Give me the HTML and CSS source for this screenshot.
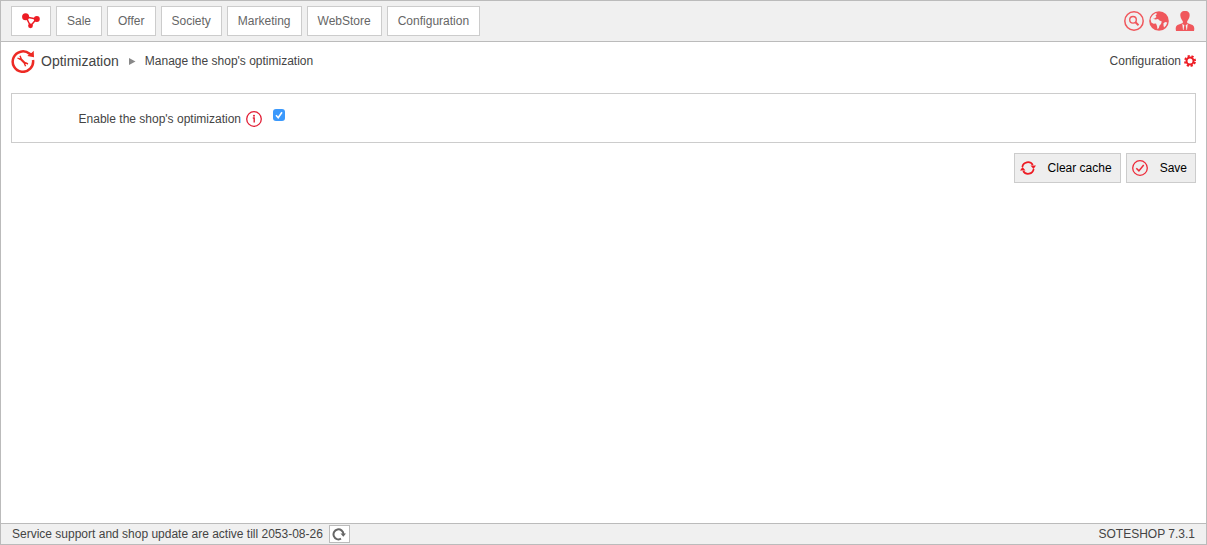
FILE: index.html
```html
<!DOCTYPE html>
<html lang="en">
<head>
  <meta charset="UTF-8">
  <meta name="viewport" content="width=device-width, initial-scale=1.0">
  <title>Optimization</title>
  <link rel="stylesheet" href="styles.css">
</head>
<body>
  <header class="topbar">
    <nav class="menu">
      <a href="#" class="menu-item menu-home" aria-label="Desktop">
        <svg width="18" height="16" viewBox="0 0 18 16">
          <path d="M4 4 L14.500 6 L8.500 13 Z" fill="none" stroke="#ed1c24" stroke-width="1.500"/>
          <circle cx="3.600" cy="3.800" r="3.500" fill="#ed1c24"/>
          <circle cx="14.800" cy="6" r="3" fill="#ed1c24"/>
          <circle cx="8.500" cy="12.800" r="2.400" fill="#ed1c24"/>
        </svg>
      </a>
      <a href="#" class="menu-item">Sale</a>
      <a href="#" class="menu-item">Offer</a>
      <a href="#" class="menu-item">Society</a>
      <a href="#" class="menu-item">Marketing</a>
      <a href="#" class="menu-item">WebStore</a>
      <a href="#" class="menu-item">Configuration</a>
    </nav>
    <div class="tools">
      <a href="#" aria-label="Search">
        <svg width="20" height="20" viewBox="0 0 20 20" fill="none" stroke="#f0575c">
          <circle cx="10" cy="10" r="9.200" stroke-width="1.500"/>
          <circle cx="9" cy="8.800" r="3.300" stroke-width="1.400"/>
          <path d="M11.500 11.300 L14.500 14.300" stroke-width="2"/>
        </svg>
      </a>
      <a href="#" aria-label="Language">
        <svg width="20" height="20" viewBox="0 0 20 20">
          <circle cx="10" cy="10" r="9.800" fill="#f0575c"/>
          <path d="M1.500 8 C2.500 5 4.500 3 7 2 L8 3 L6.500 4.500 L7.500 6 L5.500 7.500 L4 7.800 L6.500 8.500 L9 8 L10.500 9.500 L12.800 10.500 L12 13 L10.500 14.500 L9.800 17 L8.500 18.200 L8 15 L7 12.500 L4.500 12.800 L2.300 11.500 Z" fill="#f0f0f0"/>
          <path d="M14.500 12.500 L16 11 L18.200 11.500 C17.700 13.500 16.500 15.500 15 16.500 L14.500 14.500 Z" fill="#f0f0f0"/>
        </svg>
      </a>
      <a href="#" aria-label="User">
        <svg width="22" height="20" viewBox="-1 0 22 20" fill="#f0575c">
          <path d="M10 0 C13.500 0 15 2 14.600 5 C14.300 7.500 13 9 12.200 10.200 L12.200 12 L17.500 14 C18.800 14.700 19.300 16 19.300 18 L19 20 L1 20 L.7 18 C.7 16 1.200 14.700 2.500 14 L7.800 12 L7.800 10.200 C7 9 5.700 7.500 5.400 5 C5 2 6.500 0 10 0 Z"/>
          <path d="M7.300 12.800 L9.300 14.200 L8.500 19 L8 19 Z M12.700 12.800 L10.700 14.200 L11.500 19 L12 19 Z" fill="#f0f0f0"/>
        </svg>
      </a>
    </div>
  </header>

  <main class="content">
    <div class="title-row">
      <div class="breadcrumb">
        <svg class="title-icon" width="24" height="24" viewBox="0 0 24 24">
          <path d="M22 11 A10.200 10.200 0 1 1 18.500 4.800" fill="none" stroke="#ed2a24" stroke-width="2.500"/>
          <path d="M22.700 1.800 L23 8.300 L16.300 7 L18 5.500 L17 3.500 L20.500 4 Z" fill="#ed2a24"/>
          <path d="M9 9.300 L14.500 14.800" stroke="#ed2a24" stroke-width="2.200"/>
          <path d="M6.500 9 L8.800 10.200 L9.900 9 L9 6.800 M14.600 17.300 L13.600 15 L14.800 13.900 L17 15" fill="none" stroke="#ed2a24" stroke-width="1.400"/>
        </svg>
        <h1 class="title">Optimization</h1>
        <svg class="arrow" width="7" height="8" viewBox="0 0 7 8">
          <path d="M0 1 L6.500 4.500 L0 8 Z" fill="#888"/>
        </svg>
        <span>Manage the shop's optimization</span>
      </div>
      <a href="#" class="config-link">Configuration
        <svg width="12" height="12" viewBox="0 0 12 12" fill="none" stroke="#ed1c24">
          <circle cx="6" cy="6" r="3.500" stroke-width="2"/>
          <circle cx="6" cy="6" r="5.100" stroke-width="1.800" stroke-dasharray="2.200 1.806" stroke-dashoffset="-0.900"/>
        </svg>
      </a>
    </div>

    <form id="optimizationForm">
      <div class="panel">
        <label class="field-label" for="enabled">Enable the shop's optimization</label>
        <svg class="info" width="16" height="16" viewBox="0 0 16 16">
          <circle cx="8" cy="8" r="7.300" fill="none" stroke="#e21f36" stroke-width="1.300"/>
          <path d="M6.800 7 H8.200 V11.500" fill="none" stroke="#e21f36" stroke-width="1.400"/>
          <circle cx="8" cy="4.700" r="1" fill="#e21f36"/>
        </svg>
        <input type="checkbox" id="enabled" name="enabled" class="checkbox" checked>
      </div>
      <div class="actions">
        <button type="button" class="button">
          <svg width="16" height="16" viewBox="0 0 16 16">
            <path d="M2.300 7 A5.700 5.700 0 0 1 12.800 5 M13.700 9 A5.700 5.700 0 0 1 3.200 11" fill="none" stroke="#ed1c24" stroke-width="1.700"/>
            <path d="M10.500 5.500 L16 5.500 L13.500 9 Z M0 10.500 L5.500 10.500 L2.500 7 Z" fill="#ed1c24"/>
          </svg>
          Clear cache
        </button>
        <button type="submit" class="button">
          <svg width="16" height="16" viewBox="0 0 16 16" fill="none" stroke="#ed2a38">
            <circle cx="8" cy="8" r="7.300" stroke-width="1.300"/>
            <path d="M4.300 8.300 L6.900 10.900 L11.700 5" stroke-width="1.500"/>
          </svg>
          Save
        </button>
      </div>
    </form>
  </main>

  <footer class="footer">
    <div class="support">
      <span>Service support and shop update are active till 2053-08-26</span>
      <button type="button" class="refresh" aria-label="Refresh">
        <svg width="14" height="14" viewBox="0 0 14 14">
          <path d="M9 11.700 A5 5 0 1 1 11.500 7" fill="none" stroke="#666" stroke-width="2"/>
          <path d="M8.500 6.500 L14 6.500 L11.300 9.800 Z" fill="#666"/>
        </svg>
      </button>
    </div>
    <span>SOTESHOP 7.3.1</span>
  </footer>
</body>
</html>
```

FILE: styles.css
```css
* {
  box-sizing: border-box;
}
body {
  display: flex;
  flex-direction: column;
  min-height: 100vh;
  margin: 0;
  border: 1px solid #bbb;
  background-color: #fff;
  color: #444;
  font-family: "Liberation Sans", Arial, sans-serif;
  font-size: 12px;
  line-height: 16px;
}
a {
  color: inherit;
  text-decoration: none;
}
svg {
  display: block;
  flex-shrink: 0;
}
.topbar {
  display: flex;
  align-items: center;
  justify-content: space-between;
  padding: 5px 10px;
  border-bottom: 1px solid #bbb;
  background-color: #f0f0f0;
}
.menu {
  display: flex;
  gap: 5px;
}
.menu-item {
  display: flex;
  align-items: center;
  height: 30px;
  padding: 0 10px;
  border: 1px solid #ccc;
  background-color: #fff;
  color: #666;
}
.menu-item:hover {
  border-color: #999;
}
.tools {
  display: flex;
  gap: 5px;
}
.content {
  flex: 1;
  padding: 6px 10px;
}
.title-row {
  display: flex;
  align-items: center;
  justify-content: space-between;
  height: 26px;
}
.breadcrumb {
  display: flex;
  align-items: center;
}
.title {
  margin: 0 10px 0 6px;
  font-size: 14px;
  font-weight: normal;
}
.arrow {
  margin-right: 9px;
}
.config-link {
  display: flex;
  align-items: center;
  gap: 3px;
}
.panel {
  display: flex;
  align-items: center;
  height: 50px;
  margin-top: 19px;
  padding-top: 2px;
  border: 1px solid #ccc;
}
.field-label {
  width: 229px;
  text-align: right;
}
.info {
  margin: 0 11px 0 5px;
}
.checkbox {
  appearance: none;
  width: 12px;
  height: 12px;
  margin: 0 0 8px;
  border-radius: 3px;
  background: #3b99fc url("data:image/svg+xml,%3Csvg xmlns='http://www.w3.org/2000/svg' viewBox='0 0 12 12'%3E%3Cpath d='M3 6.300 L5.200 8.700 L9 3.200' fill='none' stroke='white' stroke-width='1.600'/%3E%3C/svg%3E") center / 12px no-repeat;
}
.checkbox:not(:checked) {
  border: 1px solid #bbb;
  background: #fff;
}
.actions {
  display: flex;
  justify-content: flex-end;
  gap: 5px;
  margin-top: 10px;
}
.button {
  display: flex;
  align-items: center;
  gap: 12px;
  height: 30px;
  padding: 0 8px 0 5px;
  border: 1px solid #ccc;
  background-color: #eee;
  color: #000;
  font: inherit;
  cursor: pointer;
}
.footer {
  display: flex;
  align-items: center;
  justify-content: space-between;
  height: 21px;
  padding: 0 11px;
  border-top: 1px solid #bbb;
  background-color: #f0f0f0;
}
.support {
  display: flex;
  align-items: center;
  gap: 6px;
}
.refresh {
  display: flex;
  align-items: center;
  justify-content: center;
  width: 21px;
  height: 18px;
  padding: 0;
  border: 1px solid #bbb;
  background-color: #fff;
  cursor: pointer;
}
```
